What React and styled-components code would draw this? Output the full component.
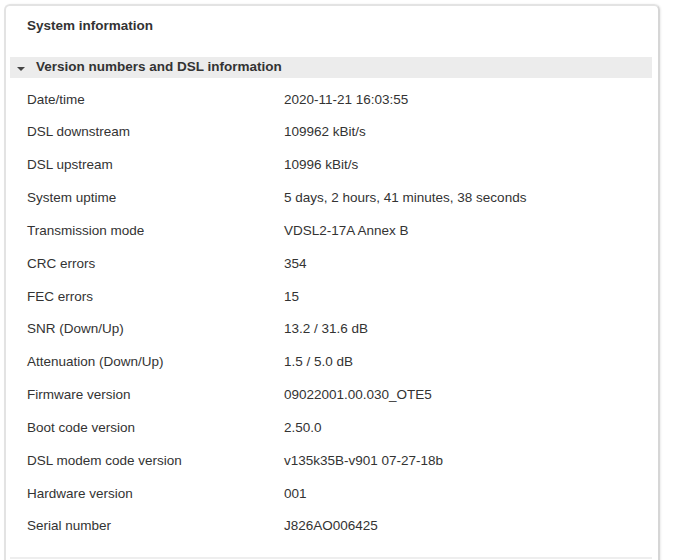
import React from "react";
import styled, { createGlobalStyle } from "styled-components";

const GlobalStyle = createGlobalStyle`
  body {
    margin: 0;
    background: #fff;
    font-family: "Liberation Sans", Arial, sans-serif;
    color: #333;
  }
`;

const Card = styled.div`
  margin: 4px 0 0 4px;
  width: 652px;
  height: 580px;
  border: 2px solid #e3e3e3;
  border-right-color: #d6d6d6;
  border-radius: 6px;
  box-shadow: 1px 0 2px rgba(0, 0, 0, 0.08);
  box-sizing: content-box;
`;

const Title = styled.h2`
  margin: 0;
  padding: 12px 0 0 21px;
  height: 39px;
  font-size: 13.5px;
  font-weight: bold;
  line-height: 16px;
  color: #333;
`;

const Section = styled.div`
  margin: 0 6px 0 4px;
  border-bottom: 2px solid #eeeeee;
`;

const SectionHeader = styled.div`
  display: flex;
  align-items: center;
  height: 21px;
  padding-bottom: 3px;
  box-sizing: border-box;
  background: #ececec;
  font-size: 13.5px;
  font-weight: bold;
  color: #333;
`;

const Caret = styled.span`
  width: 0;
  height: 0;
  margin: 5px 11px 0 7px;
  border-left: 4px solid transparent;
  border-right: 4px solid transparent;
  border-top: 4px solid #444;
`;

const Rows = styled.div`
  padding: 4.6px 0 15px;
`;

const Row = styled.div`
  display: grid;
  grid-template-columns: 257px 1fr;
  align-items: center;
  height: 32.85px;
  padding-left: 17px;
  font-size: 13.5px;
  color: #333;
`;

const info = [
  ["Date/time", "2020-11-21 16:03:55"],
  ["DSL downstream", "109962 kBit/s"],
  ["DSL upstream", "10996 kBit/s"],
  ["System uptime", "5 days, 2 hours, 41 minutes, 38 seconds"],
  ["Transmission mode", "VDSL2-17A Annex B"],
  ["CRC errors", "354"],
  ["FEC errors", "15"],
  ["SNR (Down/Up)", "13.2 / 31.6 dB"],
  ["Attenuation (Down/Up)", "1.5 / 5.0 dB"],
  ["Firmware version", "09022001.00.030_OTE5"],
  ["Boot code version", "2.50.0"],
  ["DSL modem code version", "v135k35B-v901 07-27-18b"],
  ["Hardware version", "001"],
  ["Serial number", "J826AO006425"],
];

export default function App() {
  return (
    <>
      <GlobalStyle />
      <Card>
        <Title>System information</Title>
        <Section>
          <SectionHeader>
            <Caret />
            Version numbers and DSL information
          </SectionHeader>
          <Rows>
            {info.map(([label, value]) => (
              <Row key={label}>
                <span>{label}</span>
                <span>{value}</span>
              </Row>
            ))}
          </Rows>
        </Section>
      </Card>
    </>
  );
}
